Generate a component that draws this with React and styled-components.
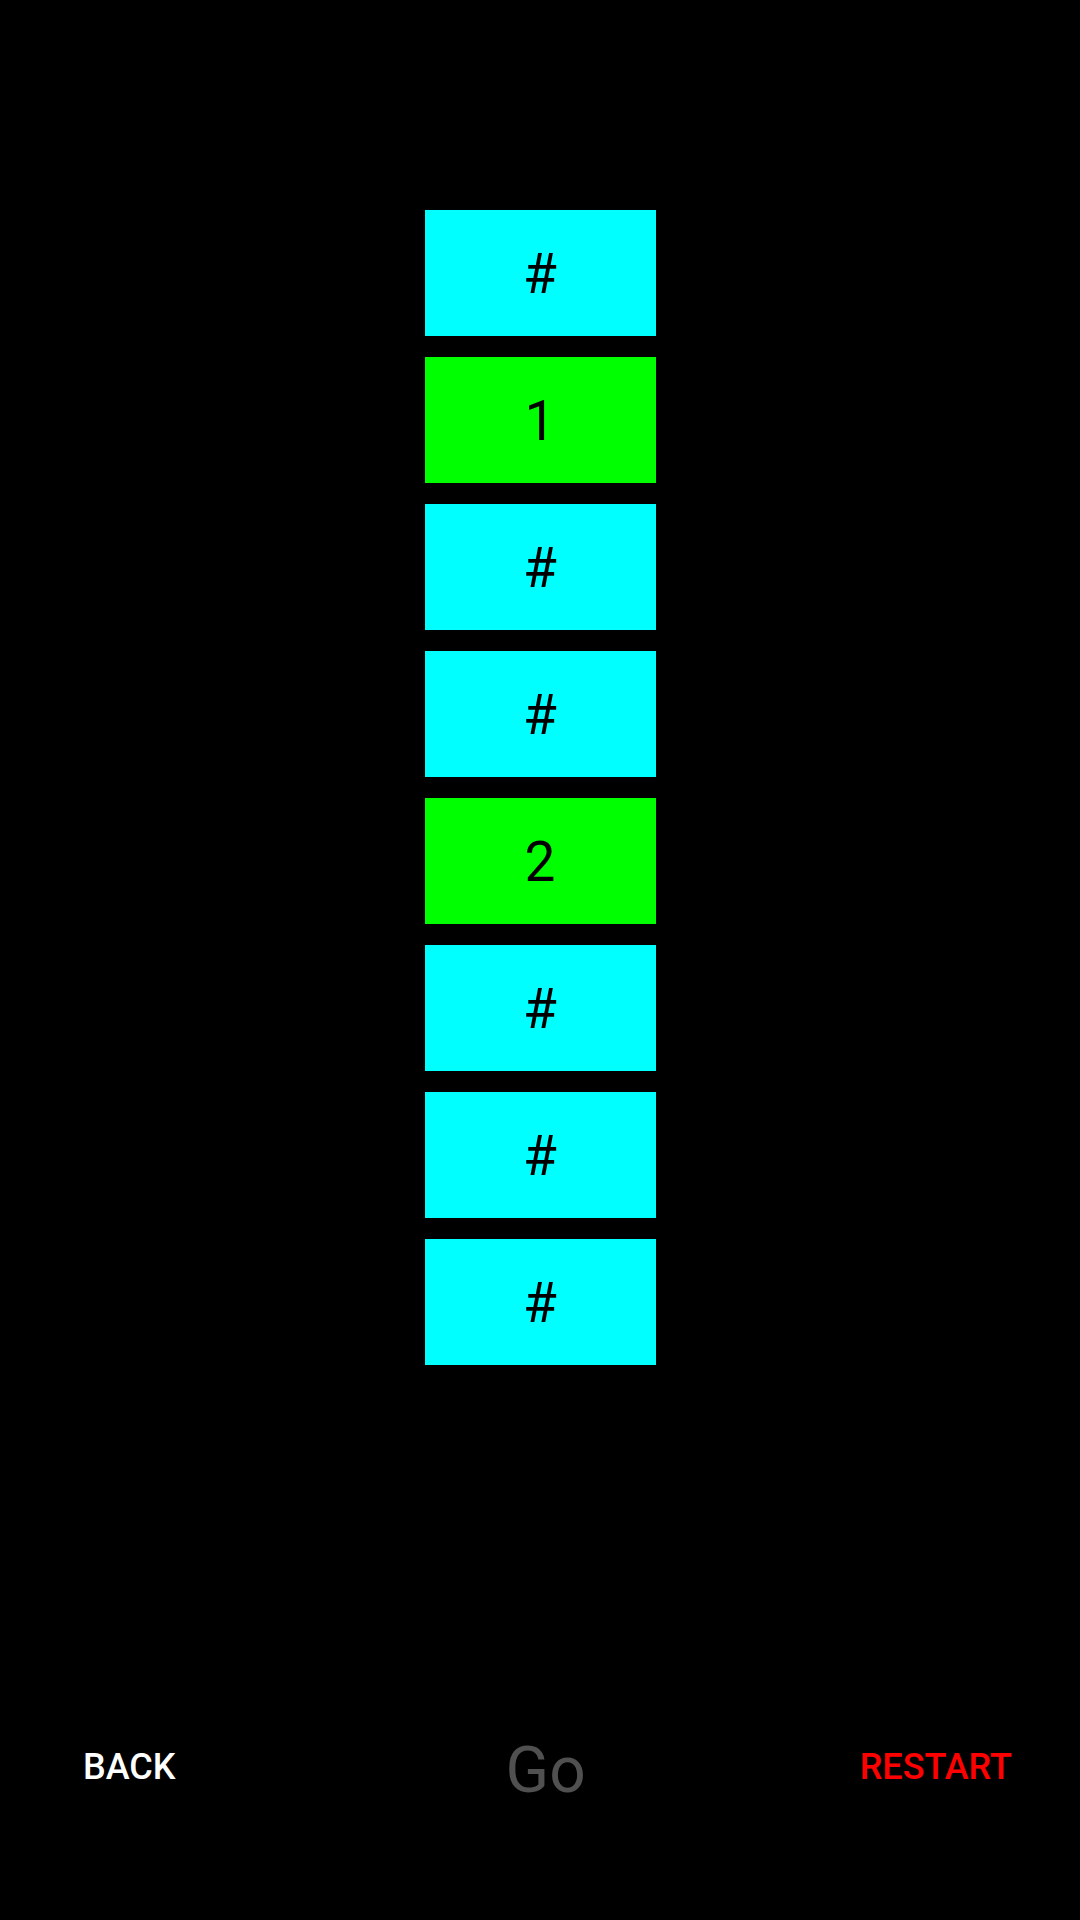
import React from "react";
import styled, { createGlobalStyle } from "styled-components";

const GlobalStyle = createGlobalStyle`
  html, body {
    margin: 0;
    padding: 0;
    background: #000;
  }
  body {
    font-family: Roboto, "Noto Sans", sans-serif;
  }
`;

const Screen = styled.div`
  width: 1080px;
  height: 1920px;
  background: #000;
  display: flex;
  flex-direction: column;
  overflow: hidden;
`;

const Column = styled.div`
  display: flex;
  flex-direction: column;
  align-items: center;
  gap: 21px;
  padding-top: 210px;
  flex: 1;
`;

const Cell = styled.div`
  width: 231px;
  height: 126px;
  background: ${(p) => (p.$hit ? "#00ff00" : "#00ffff")};
  color: #000;
  font-size: 55px;
  display: flex;
  align-items: center;
  justify-content: center;
  line-height: 1;
  padding-top: 3px;
  box-sizing: border-box;
`;

const BottomBar = styled.div`
  display: flex;
  align-items: center;
  justify-content: space-between;
  padding: 0 68px 98px 83px;
  height: 110px;
`;

const TextButton = styled.button`
  background: none;
  border: none;
  padding: 0;
  font-family: Roboto, sans-serif;
  font-size: 36px;
  font-weight: 500;
  text-transform: uppercase;
  color: ${(p) => p.$color};
  cursor: pointer;
`;

const GoLabel = styled.div`
  font-size: 64px;
  color: #505050;
  margin-left: 56px;
  margin-top: 6px;
`;

const cells = ["#", "1", "#", "#", "2", "#", "#", "#"];

export default function App() {
  return (
    <Screen>
      <GlobalStyle />
      <Column>
        {cells.map((c, i) => (
          <Cell key={i} $hit={c !== "#"}>
            {c}
          </Cell>
        ))}
      </Column>
      <BottomBar>
        <TextButton $color="#ffffff">Back</TextButton>
        <GoLabel>Go</GoLabel>
        <TextButton $color="#ff0000">Restart</TextButton>
      </BottomBar>
    </Screen>
  );
}
